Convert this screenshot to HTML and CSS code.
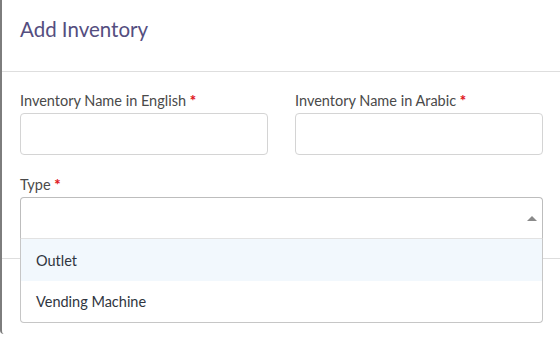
FILE: index.html
```html
<!DOCTYPE html>
<html>
<head>
<meta charset="utf-8">
<link rel="stylesheet" href="styles.css">
</head>
<body>
<div class="modal">
  <div class="modal-header">
    <h2 class="title">Add Inventory</h2>
  </div>
  <div class="modal-body">
    <div class="row">
      <div class="field">
        <label class="label">Inventory Name in English <span class="req">*</span></label>
        <div class="input"></div>
      </div>
      <div class="field">
        <label class="label">Inventory Name in Arabic <span class="req">*</span></label>
        <div class="input"></div>
      </div>
    </div>
    <div class="field type-field">
      <label class="label">Type <span class="req">*</span></label>
      <div class="select">
        <div class="select-head">
          <span class="arrow"></span>
        </div>
        <ul class="menu">
          <li class="option active">Outlet</li>
          <li class="option">Vending Machine</li>
        </ul>
      </div>
    </div>
  </div>
  <div class="modal-footer"></div>
</div>
</body>
</html>
```
FILE: styles.css
```css
* { box-sizing: border-box; }
html, body {
  margin: 0;
  padding: 0;
  background: #ffffff;
  font-family: Lato, "Open Sans", sans-serif;
}
.modal {
  width: 560px;
  height: 334px;
  background: #fff;
  border-left: 2px solid #7d7d7d;
  border-bottom-left-radius: 4px;
  display: flex;
  flex-direction: column;
}
.modal-header {
  height: 72px;
  border-bottom: 1px solid #dedede;
  padding: 17px 18px 0;
}
.title {
  margin: 0;
  font-size: 20.5px;
  line-height: 24px;
  font-weight: 400;
  color: #544e80;
}
.modal-body {
  padding: 19px 17px 19px 18px;
}
.row {
  display: grid;
  grid-template-columns: 1fr 1fr;
  column-gap: 27px;
}
.field {
  display: flex;
  flex-direction: column;
}
.type-field {
  margin-top: 20px;
}
.label {
  display: block;
  height: 20px;
  font-size: 14.5px;
  line-height: 20px;
  color: #4a4a4a;
  margin-bottom: 2px;
  overflow: visible;
}
.req {
  color: #e0161b;
  font-weight: 900;
  font-size: 15px;
  line-height: 1;
}
.input {
  height: 42px;
  border: 1px solid #d4d4d4;
  border-radius: 4px;
  background: #fff;
}
.select {
  position: relative;
  height: 42px;
}
.select-head {
  height: 42px;
  border: 1px solid #bdbdbd;
  border-bottom: 1px solid #e2e2e2;
  border-radius: 4px 4px 0 0;
  background: #fff;
  display: flex;
  align-items: center;
  justify-content: flex-end;
  padding-right: 5px;
}
.arrow {
  width: 0;
  height: 0;
  border-left: 5px solid transparent;
  border-right: 5px solid transparent;
  border-bottom: 5px solid #8a8a8a;
}
.menu {
  position: absolute;
  left: 0;
  right: 0;
  top: 42px;
  margin: 0;
  padding: 0;
  list-style: none;
  background: #fff;
  border: 1px solid #c6c6c6;
  border-top: none;
  border-radius: 0 0 4px 4px;
  z-index: 2;
}
.option {
  height: 42px;
  padding-left: 15px;
  display: flex;
  align-items: center;
  font-size: 14.5px;
  color: #2f3540;
}
.option + .option {
  height: 41px;
}
.option.active {
  background: #f2f8fd;
}
.modal-footer {
  flex: 1;
  border-top: 1px solid #dedede;
}
```
